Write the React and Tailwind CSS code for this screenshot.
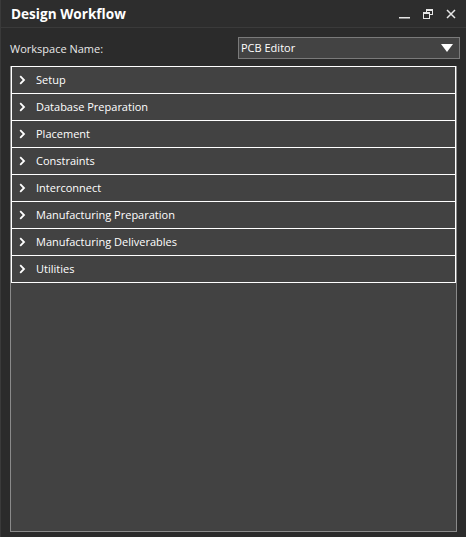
import React from "react";

const items = [
  "Setup",
  "Database Preparation",
  "Placement",
  "Constraints",
  "Interconnect",
  "Manufacturing Preparation",
  "Manufacturing Deliverables",
  "Utilities",
];

function Chevron() {
  return (
    <svg width="7" height="10" viewBox="0 0 7 10" className="block">
      <path d="M1.2 1.2 L5 5 L1.2 8.8" fill="none" stroke="#ffffff" strokeWidth="1.8" />
    </svg>
  );
}

export default function App() {
  return (
    <div
      className="w-[466px] h-[537px] bg-[#2b2b2b] border-l border-[#3a3a3a] flex flex-col text-[#f0f0f0]"
      style={{ fontFamily: '"Open Sans", "Noto Sans", sans-serif' }}
    >
      <div className="h-[28px] flex items-center border-b border-[#3a3a3a] bg-[#2d2d2d] pl-[10px] pr-[10px] shrink-0">
        <div className="text-[13.6px] font-bold text-white flex-1 pt-[2px]">Design Workflow</div>
        <div className="flex items-center gap-[13px]">
          <svg width="11" height="11" viewBox="0 0 11 11">
            <rect x="0" y="9" width="11" height="1.5" fill="#e6e6e6" />
          </svg>
          <svg width="10" height="10" viewBox="0 0 10 10">
            <rect x="3.5" y="0.5" width="6" height="5" fill="none" stroke="#e6e6e6" strokeWidth="1" />
            <rect x="3.5" y="0.5" width="6" height="1.5" fill="#e6e6e6" />
            <rect x="0.5" y="3.5" width="6" height="6" fill="#2d2d2d" stroke="#e6e6e6" strokeWidth="1" />
            <rect x="0.5" y="3.5" width="6" height="1.5" fill="#e6e6e6" />
          </svg>
          <svg width="10" height="10" viewBox="0 0 10 10">
            <path d="M1 1 L9 9 M9 1 L1 9" stroke="#e6e6e6" strokeWidth="1.5" />
          </svg>
        </div>
      </div>
      <div className="flex items-center h-[22px] mt-[9px] pl-[9px] pr-[6px] shrink-0">
        <div className="text-[11px] text-[#e8e8e8] flex-1 pt-[2px]">Workspace Name:</div>
        <div className="w-[222px] h-[22px] border border-[#7a7a7a] bg-[#434343] flex items-center pl-[2px] pr-[6px]">
          <span className="text-[11px] text-white flex-1 pt-[1px]">PCB Editor</span>
          <svg width="12" height="9" viewBox="0 0 12 9">
            <path d="M0 0 L12 0 L6 8 Z" fill="#ffffff" />
          </svg>
        </div>
      </div>
      <div className="mx-[9px] mt-[7px] mb-[5px] flex-1 border border-[#8a8a8a] bg-[#424242] flex flex-col">
        <div className="border border-white border-b-0 -mt-px">
          {items.map((it) => (
            <div key={it} className="h-[27px] border-b border-white flex items-center pl-[7px]">
              <Chevron />
              <span className="ml-[10px] text-[11px] text-white pt-[1px]">{it}</span>
            </div>
          ))}
        </div>
      </div>
    </div>
  );
}
